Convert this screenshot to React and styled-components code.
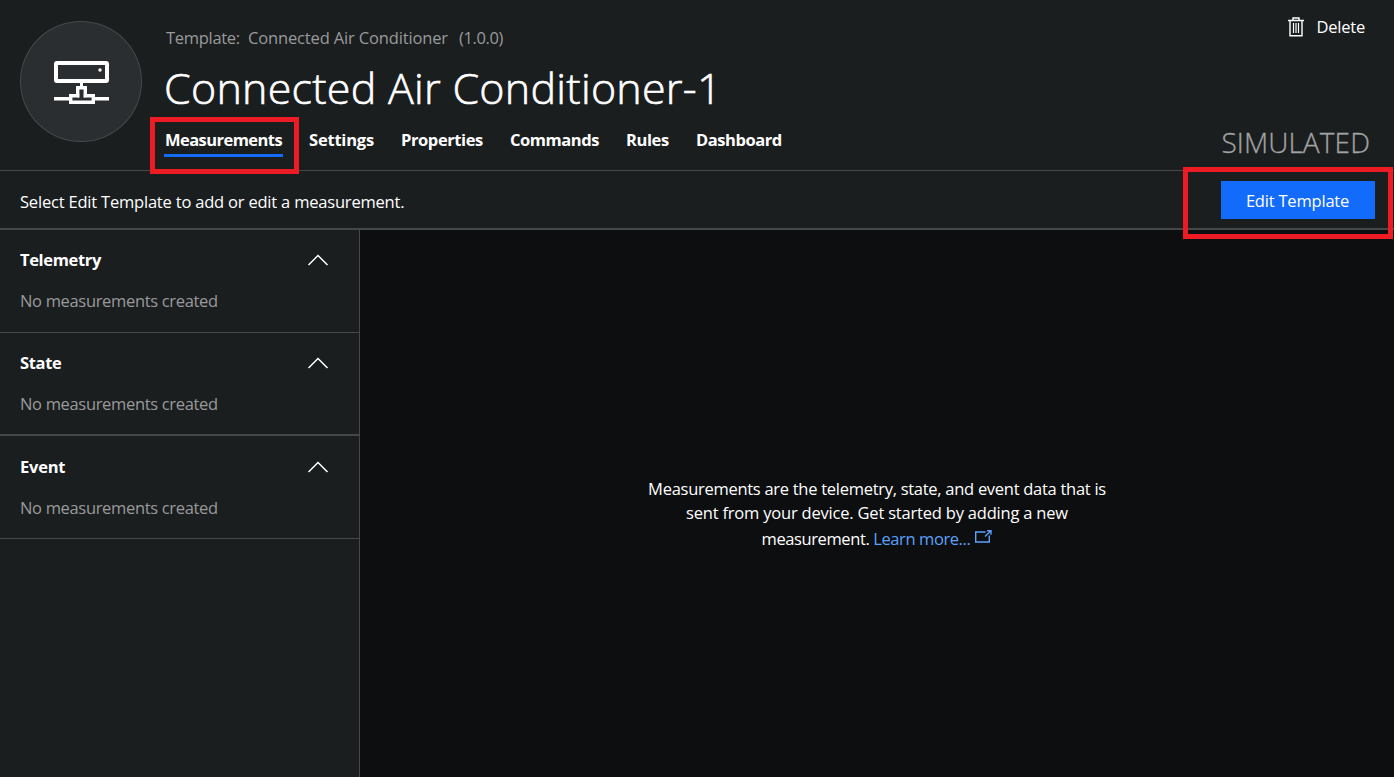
import React from "react";
import styled, { createGlobalStyle } from "styled-components";

const Global = createGlobalStyle`
  * { box-sizing: border-box; }
  body { margin: 0; background: #fff; font-family: "Open Sans", "Noto Sans", sans-serif; overflow: hidden; }
  h1, h2, p { margin: 0; }
  button { font: inherit; border: 0; background: none; color: inherit; padding: 0; }
`;

const Page = styled.div`
  width: 1394px;
  height: 777px;
  display: flex;
  flex-direction: column;
  background: #1b1e1f;
  color: #fff;
  font-size: 16.5px;
  white-space: nowrap;
`;

const Header = styled.header`
  height: 171px;
  display: flex;
  border-bottom: 1px solid #464748;
  padding-left: 20px;
`;

const Avatar = styled.div`
  width: 122px;
  height: 121px;
  margin-top: 21px;
  border: 1px solid #464748;
  border-radius: 50%;
  background: #2b2e31;
  display: flex;
  flex: none;

  svg { margin: 37px 0 0 31px; }
`;

const Heading = styled.div`
  flex: 1;
  padding: 26px 0 0 23px;
  display: flex;
  flex-direction: column;
`;

const Meta = styled.div`
  display: flex;
  height: 24px;
  line-height: 24px;
  padding-left: 1px;
  color: #999a9b;
`;

const MetaItem = styled.span`
  width: ${(p) => p.$width}px;
  letter-spacing: ${(p) => p.$track || 0}px;
`;

const Title = styled.h1`
  height: 60px;
  line-height: 60px;
  margin: 8px 0 0 -1px;
  font-size: 43px;
  font-weight: 300;
  -webkit-text-stroke: 0.6px #fff;
  letter-spacing: ${(p) => p.$track}px;
`;

const Tabs = styled.nav`
  display: flex;
  margin: 9px 0 0 -1px;
`;

const Tab = styled.button`
  position: relative;
  height: 30px;
  line-height: 24px;
  padding-bottom: 2px;
  width: ${(p) => p.$width}px;
  margin-right: ${(p) => p.$gap || 27}px;
  padding-left: ${(p) => (p.$active ? 1 : 0)}px;
  text-align: left;
  font-weight: 700;
  letter-spacing: ${(p) => p.$track || 0}px;
  border-bottom: 3px solid ${(p) => (p.$active ? "#136bfb" : "transparent")};
`;

const Highlight = styled.span`
  position: absolute;
  top: ${(p) => p.$top}px;
  left: ${(p) => p.$left}px;
  width: ${(p) => p.$width}px;
  height: ${(p) => p.$height}px;
  border: 5px solid #ed1c24;
  pointer-events: none;
`;

const Aside = styled.div`
  display: flex;
  flex-direction: column;
  align-items: flex-end;
  padding: 13px 24px 0 0;
`;

const DeleteButton = styled.button`
  display: flex;
  align-items: center;
  height: 27px;
  gap: 12px;
  margin-right: 5px;
  letter-spacing: ${(p) => p.$track}px;
`;

const Simulated = styled.div`
  margin-top: 82px;
  height: 40px;
  line-height: 40px;
  font-size: 28px;
  font-weight: 300;
  -webkit-text-stroke: 0.3px #a1a2a2;
  color: #a1a2a2;
  letter-spacing: ${(p) => p.$track}px;
`;

const Toolbar = styled.div`
  height: 59px;
  display: flex;
  align-items: center;
  justify-content: space-between;
  padding: 0 19px 0 20px;
  border-bottom: 2px solid #464748;
`;

const Hint = styled.p`
  padding-top: 3px;
  letter-spacing: ${(p) => p.$track}px;
`;

const EditButton = styled.button`
  position: relative;
  width: 154px;
  height: 38px;
  margin-top: 1px;
  padding-right: 1px;
  background: #136bfb;
  letter-spacing: ${(p) => p.$track}px;
`;

const Body = styled.div`
  flex: 1;
  display: flex;
`;

const Sidebar = styled.aside`
  width: 360px;
  border-right: 1px solid #464748;
`;

const Section = styled.section`
  height: ${(p) => p.$height}px;
  border-bottom: ${(p) => p.$line || 1}px solid #464748;
  padding: ${(p) => p.$top || 16}px 30px 0 20px;
`;

const SectionHead = styled.div`
  display: flex;
  justify-content: space-between;
  align-items: center;
  height: 26px;
`;

const SectionTitle = styled.h2`
  font-size: 16.5px;
  font-weight: 700;
  letter-spacing: ${(p) => p.$track}px;
`;

const Empty = styled.p`
  margin-top: 16px;
  line-height: 26px;
  color: #999a9b;
  letter-spacing: ${(p) => p.$track}px;
`;

const Main = styled.main`
  flex: 1;
  background: #0d0e0f;
  display: flex;
  flex-direction: column;
  align-items: center;
  padding-top: 246px;
`;

const Line = styled.p`
  height: ${(p) => p.$height || 25}px;
  line-height: 25px;
  letter-spacing: ${(p) => p.$track}px;
`;

const Link = styled.a`
  color: #5ba1fc;
  svg { margin: 0 0 2px 5px; }
`;

const DeviceIcon = () => (
  <svg width="58" height="46" viewBox="0 0 58 46" fill="none" stroke="#fff">
    <rect x="4" y="4" width="51" height="18" rx="1" strokeWidth="4" />
    <circle cx="48" cy="11" r="1.7" fill="#fff" stroke="none" />
    <path d="M29.500 23v5" strokeWidth="3" />
    <path d="M2 39.800h16M42 39.800h15" strokeWidth="3.400" />
    <path d="M25.700 36.700v-8h7.600v8h8v6.600H18.700v-6.600z" strokeWidth="3.400" />
    <path d="M25.700 36.700h1.500M33.300 36.700h-1.500" strokeWidth="3.400" />
  </svg>
);

const TrashIcon = () => (
  <svg width="16" height="20" viewBox="0 0 16 20" fill="none" stroke="#fff" strokeWidth="1.4">
    <path d="M0 3.500h16M5 3.500V1h6v2.500M2 3.500v15.200h12V3.500" />
    <path d="M5.500 6v10M8 6v10M10.500 6v10" strokeWidth="1.2" />
  </svg>
);

const Chevron = () => (
  <svg width="22" height="13" viewBox="0 0 22 13" fill="none" stroke="#fff" strokeWidth="1.5">
    <path d="M1.500 12 11 2.500l9.500 9.500" />
  </svg>
);

const ExternalIcon = () => (
  <svg width="17" height="13" viewBox="0 0 17 13" fill="none" stroke="#5ba1fc" strokeWidth="1.4">
    <path d="M10.500 2H.7v10h13.600V5.500M10 6.500 15.800.8M12 .7h4v4" />
  </svg>
);

const sections = [
  { name: "Telemetry", height: 103, track: -0.35 },
  { name: "State", height: 103, line: 2, track: -0.35 },
  { name: "Event", height: 103, top: 17, track: -0.25 },
];

const tabs = [
  { name: "Settings", width: 65, track: -0.2 },
  { name: "Properties", width: 82, track: -0.4 },
  { name: "Commands", width: 89, track: -0.45 },
  { name: "Rules", width: 43, track: -0.4 },
  { name: "Dashboard", width: 87, track: -0.45 },
];

export default function App() {
  return (
    <>
      <Global />
      <Page>
        <Header>
          <Avatar><DeviceIcon /></Avatar>
          <Heading>
            <Meta>
              <MetaItem $width={82} $track={-0.3}>Template:</MetaItem>
              <MetaItem $width={211} $track={-0.15}>Connected Air Conditioner</MetaItem>
              <MetaItem $width={46} $track={-0.4}>(1.0.0)</MetaItem>
            </Meta>
            <Title $track={0.25}>Connected Air Conditioner-1</Title>
            <Tabs>
              <Tab $active $width={119} $gap={26} $track={-0.55}>
                Measurements
                <Highlight $top={-10} $left={-14} $width={149} $height={57} />
              </Tab>
              {tabs.map((t) => (
                <Tab key={t.name} $width={t.width} $track={t.track}>{t.name}</Tab>
              ))}
            </Tabs>
          </Heading>
          <Aside>
            <DeleteButton $track={-0.2}><TrashIcon />Delete</DeleteButton>
            <Simulated $track={0.1}>SIMULATED</Simulated>
          </Aside>
        </Header>
        <Toolbar>
          <Hint $track={-0.2}>Select Edit Template to add or edit a measurement.</Hint>
          <EditButton $track={-0.2}>
            Edit Template
            <Highlight $top={-14} $left={-38} $width={210} $height={72} />
          </EditButton>
        </Toolbar>
        <Body>
          <Sidebar>
            {sections.map((s) => (
              <Section key={s.name} $height={s.height} $line={s.line} $top={s.top}>
                <SectionHead>
                  <SectionTitle $track={s.track}>{s.name}</SectionTitle>
                  <Chevron />
                </SectionHead>
                <Empty $track={-0.33}>No measurements created</Empty>
              </Section>
            ))}
          </Sidebar>
          <Main>
            <Line $track={-0.28} $height={24}>Measurements are the telemetry, state, and event data that is</Line>
            <Line $track={-0.2} $height={26}>sent from your device. Get started by adding a new</Line>
            <Line $track={-0.4}>measurement. <Link>Learn more...<ExternalIcon /></Link></Line>
          </Main>
        </Body>
      </Page>
    </>
  );
}
